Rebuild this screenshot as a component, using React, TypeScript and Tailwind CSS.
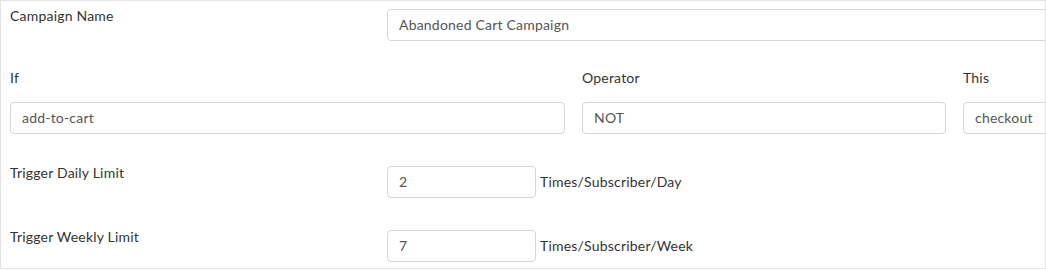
const inputClass =
  "block h-[32px] w-full rounded-[4px] border border-[#d6d6d6] bg-white pb-[2px] pl-[11px] pr-2 text-[14px] tracking-[0.2px] text-[#555] outline-none";

const conditionFields = [
  { label: "If", value: "add-to-cart", width: "w-[555px]" },
  { label: "Operator", value: "NOT", width: "w-[364px]" },
  { label: "This", value: "checkout", width: "w-[174px]" },
];

const limitFields = [
  { label: "Trigger Daily Limit", value: "2", unit: "Times/Subscriber/Day" },
  { label: "Trigger Weekly Limit", value: "7", unit: "Times/Subscriber/Week" },
];

export default function App() {
  return (
    <div className="h-[269px] w-[1046px] overflow-hidden border border-[#e3e3e3] bg-white pl-[9px] pt-[5px] font-['Lato','Liberation_Sans',sans-serif] text-[14px] leading-5 tracking-[0.2px] text-[#333]">
      <div className="flex w-[1200px] items-start">
        <label className="w-[377px] shrink-0">Campaign Name</label>
        <input className={`${inputClass} mt-[3px] !w-[700px]`} defaultValue="Abandoned Cart Campaign" />
      </div>

      <div className="mt-[27px] flex w-[1200px] gap-[17px]">
        {conditionFields.map((field) => (
          <div key={field.label} className={`${field.width} shrink-0`}>
            <label className="block h-5">{field.label}</label>
            <input className={`${inputClass} mt-[14px]`} defaultValue={field.value} />
          </div>
        ))}
      </div>

      {limitFields.map((field) => (
        <div key={field.label} className="mt-[29px] flex items-start">
          <label className="w-[377px] shrink-0">{field.label}</label>
          <div className="mt-[3px] flex items-center">
            <input className={`${inputClass} !w-[149px]`} defaultValue={field.value} />
            <span className="ml-[4px] leading-8">{field.unit}</span>
          </div>
        </div>
      ))}
    </div>
  );
}
